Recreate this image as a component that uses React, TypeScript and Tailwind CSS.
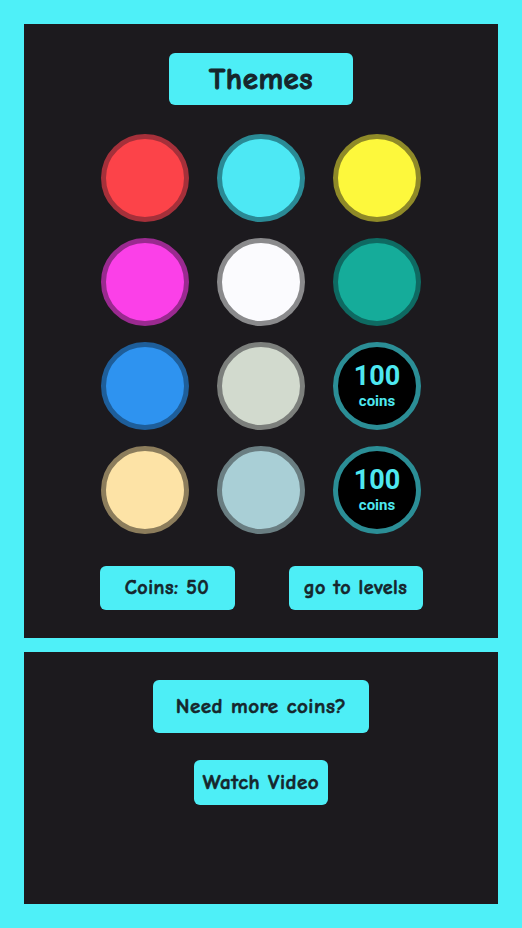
const font = { fontFamily: '"Comic Sans MS", "Comic Neue", "DejaVu Sans", sans-serif' };

type Swatch = { fill: string; ring: string } | { coin: true };

const swatches: Swatch[] = [
  { fill: 'bg-[#fc4349]', ring: 'border-[#a5303a]' },
  { fill: 'bg-[#4de8f4]', ring: 'border-[#2a8a95]' },
  { fill: 'bg-[#fdf83c]', ring: 'border-[#8f8a28]' },
  { fill: 'bg-[#fb40e8]', ring: 'border-[#9a2a90]' },
  { fill: 'bg-[#fbfbfe]', ring: 'border-[#8a8a8c]' },
  { fill: 'bg-[#15ac9a]', ring: 'border-[#0e6a62]' },
  { fill: 'bg-[#2e93f0]', ring: 'border-[#1e5e9a]' },
  { fill: 'bg-[#d2dace]', ring: 'border-[#7c7f7c]' },
  { coin: true },
  { fill: 'bg-[#fde3a6]', ring: 'border-[#8c7d5c]' },
  { fill: 'bg-[#a9cfd6]', ring: 'border-[#6a7e82]' },
  { coin: true },
];

function Circle({ s }: { s: Swatch }) {
  if ('coin' in s) {
    return (
      <div
        className="w-[88px] h-[88px] rounded-full border-[5px] border-[#2b8e96] bg-black flex flex-col items-center justify-center text-[#4ee8f0] font-bold"
        style={{ fontFamily: 'Roboto, sans-serif' }}
      >
        <span className="text-[27px] leading-[31px]">100</span>
        <span className="text-[15px] leading-[18px] mb-[2px]">coins</span>
      </div>
    );
  }
  return <div className={`w-[88px] h-[88px] rounded-full border-[5px] ${s.fill} ${s.ring}`} />;
}

function Btn({ children, className = '' }: { children: React.ReactNode; className?: string }) {
  return (
    <div className={`bg-[#4deef6] rounded-md flex items-center justify-center text-[#16262c] font-bold tracking-[0.5px] [-webkit-text-stroke:0.6px_#16262c] ${className}`}>
      {children}
    </div>
  );
}

export default function App() {
  return (
    <div className="bg-[#4ef0f8] min-h-[928px] p-6 flex flex-col gap-[14px]" style={font}>
      {/* themes panel */}
      <div className="bg-[#1c1a1e] h-[614px] flex flex-col items-center pt-[29px]">
        <Btn className="w-[184px] h-[52px] text-[31px] [-webkit-text-stroke:1px_#16262c]">Themes</Btn>
        <div className="grid grid-cols-3 gap-x-[28px] gap-y-[16px] mt-[29px]">
          {swatches.map((s, i) => (
            <Circle key={i} s={s} />
          ))}
        </div>
        <div className="flex gap-[54px] mt-[32px]">
          <Btn className="w-[135px] h-[44px] text-[20px]">Coins: 50</Btn>
          <Btn className="w-[134px] h-[44px] text-[20px]">go to levels</Btn>
        </div>
      </div>

      {/* coins panel */}
      <div className="bg-[#1c1a1e] h-[252px] flex flex-col items-center pt-[28px]">
        <Btn className="w-[216px] h-[53px] text-[21px]">Need more coins?</Btn>
        <Btn className="w-[134px] h-[45px] text-[21px] mt-[27px]">Watch Video</Btn>
      </div>
    </div>
  );
}
